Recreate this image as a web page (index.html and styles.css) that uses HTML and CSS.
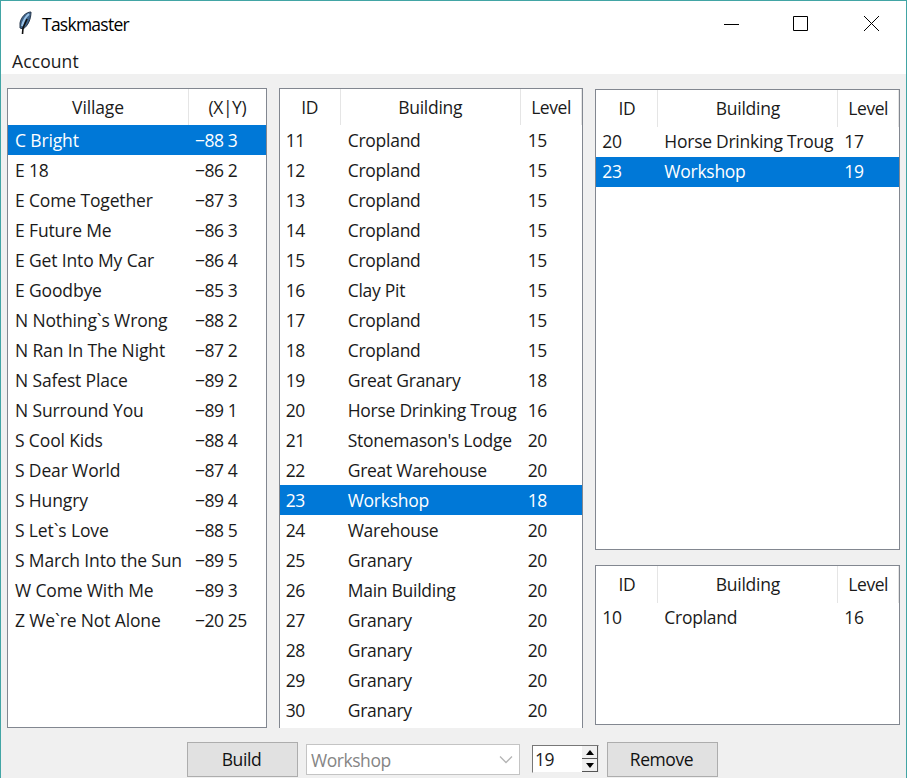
FILE: index.html
```
<!DOCTYPE html>
<html lang="en">
<head>
<meta charset="utf-8">
<title>Taskmaster</title>
<link rel="stylesheet" href="styles.css">
</head>
<body>
<div class="window">
  <header class="titlebar">
    <svg class="feather" width="16" height="26" viewBox="0 0 16 26"><path d="M14 2C9 2 4 7 3 13L3 18L6 19C11 16 14 9 14 2Z" fill="#3f658c" stroke="#26364b"/><path d="M12 4C8 7 6 12 5 16" fill="none" stroke="#9cc4e8" stroke-width="2"/><path d="M10 9L6 18L5.500 24" fill="none" stroke="#111" stroke-width="1.600"/></svg>
    <h1 class="title"><span>Taskmaster</span></h1>
    <svg class="controls" width="156" height="16" viewBox="0 0 156 16" fill="none" stroke="#000"><path d="M0 8.500H15M69.500 .500H83.500V14.500H69.500ZM140 0L155 15M155 0L140 15"/></svg>
  </header>
  <nav class="menu"><span>Account</span></nav>
  <main class="panels">
    <section class="panel villages" data-list="villages"></section>
    <section class="panel buildings" data-list="buildings"></section>
    <div class="queues">
      <section class="panel queue" data-list="queue"></section>
      <section class="panel active" data-list="active"></section>
    </div>
  </main>
  <footer class="actions">
    <button class="button">Build</button>
    <div class="combo"><span>Workshop</span><svg width="14" height="9" viewBox="0 0 14 9"><path d="M1 1.500L7 7.500L13 1.500" fill="none" stroke="#b5b5b5" stroke-width="1.300"/></svg></div>
    <div class="spin"><span>19</span><div class="arrows"><i class="up"></i><i class="down"></i></div></div>
    <button class="button">Remove</button>
  </footer>
</div>
<script src="app.js"></script>
</body>
</html>
```
FILE: styles.css
```
* { box-sizing: border-box; }
body { margin: 0; font: 17.5px/30px "Open Sans", "Noto Sans", sans-serif; letter-spacing: -0.45px; color: #1a1a1a; }
.window { width: 907px; height: 778px; overflow: hidden; background: #f0f0f0; border: 1px solid #42a5a5; border-bottom: 0; }
.titlebar { height: 47px; display: flex; align-items: flex-start; background: #fff; padding-left: 16px; }
.feather { margin-top: 9px; }
.title { margin: 8px 0 0 9px; font-size: 17.5px; font-weight: 400; letter-spacing: -0.75px; color: #000; }
.controls { margin: 15px 26px 0 auto; }
.menu { height: 26px; background: #fff; padding-left: 11px; line-height: 26px; letter-spacing: 0.1px; }
.panels { height: 654px; padding: 14px 6px 0; display: flex; }
.panel { background: #fff; border: 1px solid #828790; overflow: hidden; }
.villages { width: 260px; height: 640px; margin-right: 12px; }
.buildings { width: 305px; height: 640px; border-bottom: 0; margin-right: 12px; }
.queues { width: 305px; padding-top: 1px; display: flex; flex-direction: column; gap: 15px; }
.queue { height: 461px; }
.active { height: 160px; }
.row { display: grid; grid-template-columns: 61px 180px 1fr; height: 30px; line-height: 30px; }
.queues .row { grid-template-columns: 62px 180px 1fr; line-height: 28px; }
.villages .row { grid-template-columns: 181px 1fr; }
.row span { padding-left: 7px; white-space: nowrap; overflow: hidden; margin-right: 4px; }
.row span:first-child { padding-left: 6px; }
.row span:nth-child(2) { letter-spacing: -0.27px; }
.queues .row span:nth-child(2) { padding-left: 6px; }
.queues .row span:nth-child(3) { padding-left: 6px; }
.villages .row span:first-child { padding-left: 7px; letter-spacing: -0.14px; }
.villages .row span:nth-child(2) { padding-left: 6px; letter-spacing: -0.45px; }
.panel .row.head { height: 36px; line-height: 36px; }
.queues .panel .row.head { height: 37px; line-height: 37px; }
.panel .row.head span:nth-child(n) { padding: 0; text-align: center; border-right: 1px solid #e5e5e5; margin: 0; }
.villages .row.head span:last-child { border-right: 0; }
.row.selected { background: #0078d7; color: #fff; }
.actions { height: 50px; display: flex; align-items: flex-start; padding: 14px 0 0 186px; }
.button { width: 111px; height: 35px; padding: 0 2px 2px 0; border: 1px solid #adadad; background: #e1e1e1; font: inherit; letter-spacing: -0.4px; color: #111; }
.combo { width: 214px; height: 31px; margin: 2px 12px 0 8px; padding: 0 6px 0 4px; display: flex; justify-content: space-between; align-items: center; border: 1px solid #c4c4c4; background: #fff; color: #858585; }
.spin { width: 67px; height: 28px; margin: 3px 8px 0 0; display: flex; justify-content: space-between; background: #fff; border: 1px solid #777; border-right-color: #e5e5e5; border-bottom-color: #f0f0f0; padding-left: 2px; line-height: 27px; }
.arrows { width: 16px; display: flex; flex-direction: column; }
.arrows i { height: 13px; background: #f0f0f0; border-right: 1px solid #555; border-bottom: 1px solid #555; display: flex; justify-content: center; align-items: center; }
.arrows i::after { content: ""; border: 4px solid transparent; border-top-width: 0; border-bottom: 5px solid #000; }
.arrows .down::after { transform: rotate(180deg); }
```
FILE: app.js
```
const lists = {
  villages: { head: ["Village", "(X|Y)"], selected: 0, rows: [
    ["C Bright", "−88 3"], ["E 18", "−86 2"], ["E Come Together", "−87 3"], ["E Future Me", "−86 3"],
    ["E Get Into My Car", "−86 4"], ["E Goodbye", "−85 3"], ["N Nothing`s Wrong", "−88 2"], ["N Ran In The Night", "−87 2"],
    ["N Safest Place", "−89 2"], ["N Surround You", "−89 1"], ["S Cool Kids", "−88 4"], ["S Dear World", "−87 4"],
    ["S Hungry", "−89 4"], ["S Let`s Love", "−88 5"], ["S March Into the Sun", "−89 5"], ["W Come With Me", "−89 3"],
    ["Z We`re Not Alone", "−20 25"]] },
  buildings: { head: ["ID", "Building", "Level"], selected: 12, rows: [
    [11, "Cropland", 15], [12, "Cropland", 15], [13, "Cropland", 15], [14, "Cropland", 15], [15, "Cropland", 15],
    [16, "Clay Pit", 15], [17, "Cropland", 15], [18, "Cropland", 15], [19, "Great Granary", 18],
    [20, "Horse Drinking Troug", 16], [21, "Stonemason's Lodge", 20], [22, "Great Warehouse", 20], [23, "Workshop", 18],
    [24, "Warehouse", 20], [25, "Granary", 20], [26, "Main Building", 20], [27, "Granary", 20], [28, "Granary", 20],
    [29, "Granary", 20], [30, "Granary", 20]] },
  queue: { head: ["ID", "Building", "Level"], selected: 1, rows: [[20, "Horse Drinking Troug", 17], [23, "Workshop", 19]] },
  active: { head: ["ID", "Building", "Level"], selected: -1, rows: [[10, "Cropland", 16]] }
};
function addRow(panel, cells, className) {
  const row = document.createElement("div");
  row.className = className;
  for (const text of cells) {
    const cell = document.createElement("span");
    cell.textContent = text;
    row.append(cell);
  }
  panel.append(row);
}
document.querySelectorAll("[data-list]").forEach((panel) => {
  const list = lists[panel.dataset.list];
  addRow(panel, list.head, "row head");
  list.rows.forEach((cells, i) => addRow(panel, cells, i === list.selected ? "row selected" : "row"));
});
```
